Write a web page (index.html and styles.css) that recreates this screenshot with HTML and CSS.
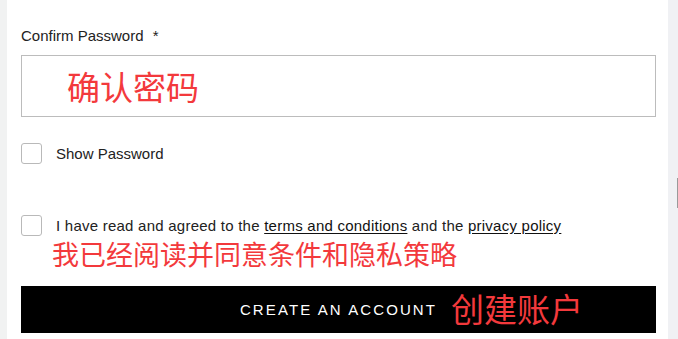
FILE: index.html
```html
<!DOCTYPE html>
<html lang="en">
<head>
<meta charset="utf-8">
<link rel="stylesheet" href="styles.css">
</head>
<body>
<div class="page">
  <div class="panel">
    <label class="field-label">Confirm Password <span class="req">*</span></label>
    <div class="input"><span class="note note-lg">确认密码</span></div>
    <div class="check-row show-row">
      <span class="box"></span>
      <span class="check-text">Show Password</span>
    </div>
    <div class="check-row terms-row">
      <span class="box"></span>
      <span class="check-text terms-text">I have read and agreed to the <a href="#">terms and conditions</a> and the <a href="#">privacy policy</a></span>
    </div>
    <div class="note note-md terms-note">我已经阅读并同意条件和隐私策略</div>
    <div class="button">
      <span class="btn-text">CREATE AN ACCOUNT</span>
      <span class="note note-lg btn-note">创建账户</span>
    </div>
  </div>
  <div class="rail"><span class="thumb"></span></div>
</div>
</body>
</html>
```
FILE: styles.css
```css
html, body {
  margin: 0;
  padding: 0;
}
body {
  width: 678px;
  height: 339px;
  overflow: hidden;
  background: #f1f2f2;
  font-family: "Liberation Sans", Arial, sans-serif;
  color: #222;
}
.page {
  display: flex;
  height: 339px;
  padding-left: 7px;
}
.panel {
  width: 661px;
  background: #fff;
  padding: 26px 12px 0 14px;
  box-sizing: border-box;
}
.rail {
  flex: 1;
  background: #f0f1f4;
  display: flex;
  justify-content: flex-end;
  padding-top: 178px;
  align-items: flex-start;
}
.thumb {
  display: block;
  width: 1px;
  height: 30px;
  background: #9a9a9a;
}
.field-label {
  display: block;
  font-size: 15px;
  line-height: 20px;
  color: #222;
}
.req {
  margin-left: 5px;
}
.input {
  margin-top: 9px;
  height: 62px;
  box-sizing: border-box;
  border: 1px solid #bcbcbc;
  display: flex;
  align-items: center;
  padding-left: 45px;
}
.note {
  font-family: "Noto Sans CJK SC", "Noto Sans", sans-serif;
  color: #f3393c;
  line-height: 1;
}
.note-lg {
  font-size: 33px;
}
.note-md {
  font-size: 27px;
}
.check-row {
  display: flex;
  align-items: center;
  gap: 14px;
}
.show-row {
  margin-top: 26px;
}
.terms-row {
  margin-top: 51px;
}
.box {
  display: block;
  width: 21px;
  height: 21px;
  box-sizing: border-box;
  border: 1px solid #b9b9b9;
  border-radius: 3px;
  flex: none;
}
.check-text {
  font-size: 15px;
  line-height: 20px;
  color: #222;
}
.terms-text {
  letter-spacing: 0.24px;
}
.check-text a {
  color: #111;
  text-decoration: underline;
  text-underline-offset: 2px;
}
.terms-note {
  margin-top: 4px;
  margin-left: 31px;
}
.button {
  position: relative;
  margin-top: 19px;
  height: 47px;
  background: #000;
  display: flex;
  align-items: center;
  justify-content: center;
}
.btn-text {
  color: #fff;
  font-size: 15px;
  letter-spacing: 2.1px;
}
.btn-note {
  position: absolute;
  left: 430px;
  top: 6px;
}
```
